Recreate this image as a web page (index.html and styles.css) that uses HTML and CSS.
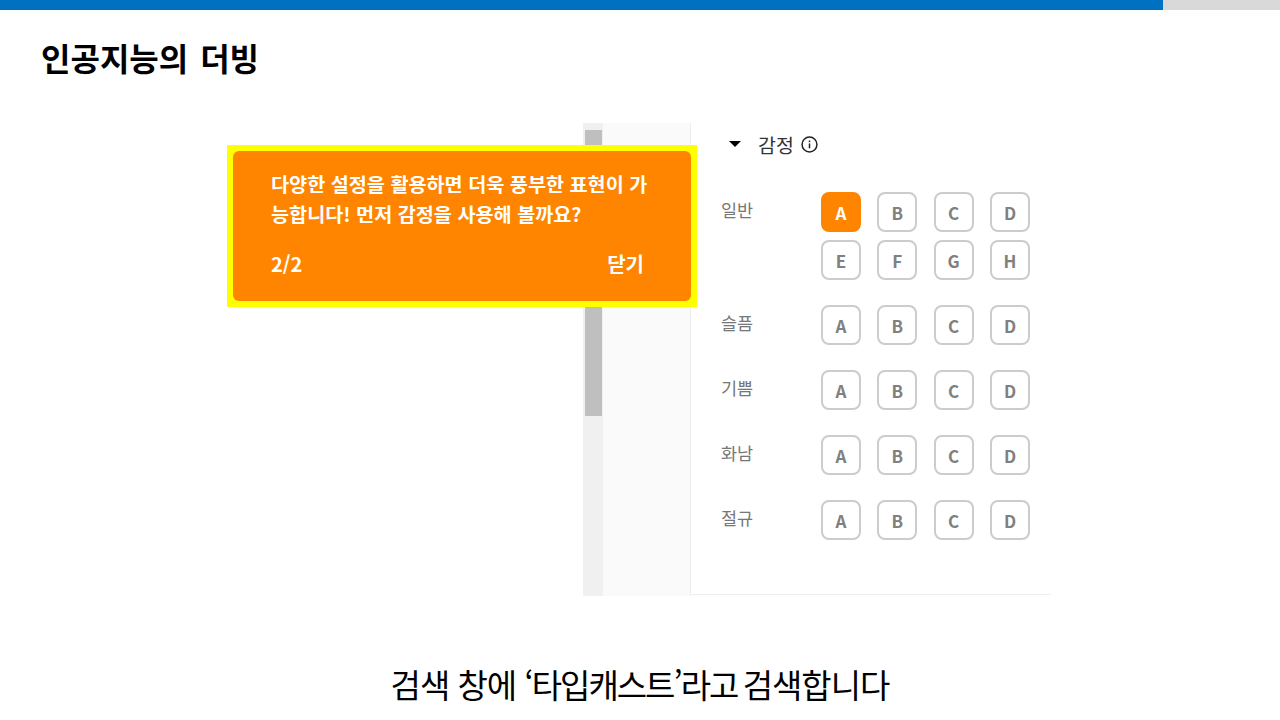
FILE: index.html
```html
<!DOCTYPE html>
<html lang="ko">
<head>
    <meta charset="UTF-8">
    <title>인공지능의 더빙</title>
    <link rel="stylesheet" href="styles.css">
</head>
<body>
    <div class="progress"><div class="progress-fill"></div></div>

    <h1 class="slide-title">인공지능의 더빙</h1>

    <div class="stage">
        <div class="scrollbar"><div class="scrollbar-thumb"></div></div>
        <div class="side"></div>
        <div class="panel">
            <div class="panel-head">
                <span class="caret"></span>
                <span class="panel-title">감정</span>
                <svg class="info" width="17" height="17" viewBox="0 0 16 16">
                    <circle cx="8" cy="8" r="7" fill="none" stroke="#222" stroke-width="1.4"/>
                    <rect x="7.3" y="7" width="1.4" height="4.6" fill="#222"/>
                    <rect x="7.3" y="4.3" width="1.4" height="1.5" fill="#222"/>
                </svg>
            </div>

            <div class="emotion emotion-first">
                <div class="emotion-name">일반</div>
                <div class="chips">
                    <button class="chip chip-on">A</button>
                    <button class="chip">B</button>
                    <button class="chip">C</button>
                    <button class="chip">D</button>
                    <button class="chip">E</button>
                    <button class="chip">F</button>
                    <button class="chip">G</button>
                    <button class="chip">H</button>
                </div>
            </div>
            <div class="emotion">
                <div class="emotion-name">슬픔</div>
                <div class="chips">
                    <button class="chip">A</button>
                    <button class="chip">B</button>
                    <button class="chip">C</button>
                    <button class="chip">D</button>
                </div>
            </div>
            <div class="emotion">
                <div class="emotion-name">기쁨</div>
                <div class="chips">
                    <button class="chip">A</button>
                    <button class="chip">B</button>
                    <button class="chip">C</button>
                    <button class="chip">D</button>
                </div>
            </div>
            <div class="emotion">
                <div class="emotion-name">화남</div>
                <div class="chips">
                    <button class="chip">A</button>
                    <button class="chip">B</button>
                    <button class="chip">C</button>
                    <button class="chip">D</button>
                </div>
            </div>
            <div class="emotion">
                <div class="emotion-name">절규</div>
                <div class="chips">
                    <button class="chip">A</button>
                    <button class="chip">B</button>
                    <button class="chip">C</button>
                    <button class="chip">D</button>
                </div>
            </div>
        </div>

        <div class="tip">
            <div class="tip-box">
                <p class="tip-text">다양한 설정을 활용하면 더욱 풍부한 표현이 가능합니다! 먼저 감정을 사용해 볼까요?</p>
                <div class="tip-foot">
                    <span>2/2</span>
                    <span>닫기</span>
                </div>
            </div>
        </div>
    </div>

    <p class="caption">검색 창에 <span class="caption-tight">‘타입캐스트’라고 </span>검색합니다</p>
</body>
</html>
```

FILE: styles.css
```css
* {
    box-sizing: border-box;
}
html, body {
    height: 720px;
    overflow: hidden;
}
body {
    margin: 0;
    background-color: #fff;
    font-family: 'Noto Sans CJK KR', 'Noto Sans', sans-serif;
}
.progress {
    height: 10px;
    background-color: #d9d9d9;
}
.progress-fill {
    width: 1163px;
    height: 100%;
    background-color: #0070c0;
}
.slide-title {
    margin: 0;
    padding: 23px 0 0 41px;
    height: 113px;
    font-size: 32px;
    line-height: 48px;
    font-weight: 700;
    word-spacing: 3px;
    color: #000;
}
.stage {
    position: relative;
    display: flex;
    width: 468px;
    height: 473px;
    margin-left: 583px;
}
.scrollbar {
    width: 20px;
    padding: 7px 1px 0 2px;
    background-color: #f0f0f0;
}
.scrollbar-thumb {
    height: 286px;
    background-color: #bfbfbf;
}
.side {
    width: 88px;
    background-color: #fafafa;
    border-right: 1px solid #eee;
}
.panel {
    flex: 1;
    height: 472px;
    padding-left: 30px;
    border-bottom: 1px solid #eee;
}
.panel-head {
    display: flex;
    align-items: center;
    height: 42px;
    padding-left: 8px;
}
.caret {
    width: 0;
    height: 0;
    margin-right: 17px;
    border-left: 6px solid transparent;
    border-right: 6px solid transparent;
    border-top: 6px solid #000;
}
.panel-title {
    margin-right: 7px;
    font-size: 19.5px;
    color: #333;
}
.emotion {
    display: flex;
    margin-top: 25px;
}
.emotion-first {
    margin-top: 27px;
}
.emotion-name {
    width: 100px;
    font-size: 17.5px;
    line-height: 35px;
    color: #777;
}
.chips {
    display: grid;
    grid-template-columns: repeat(4, 40px);
    column-gap: 16.33px;
    row-gap: 8px;
}
.chip {
    width: 40px;
    height: 40px;
    padding: 0;
    border: 2px solid #ccc;
    border-radius: 8px;
    background-color: #fff;
    font-family: inherit;
    font-size: 17px;
    font-weight: 700;
    color: #808080;
}
.chip-on {
    border-color: #ff8400;
    background-color: #ff8400;
    color: #fff;
}
.tip {
    position: absolute;
    left: -356px;
    top: 22px;
    width: 470px;
    height: 162px;
    padding: 6px;
    background-color: #ffff00;
}
.tip-box {
    height: 100%;
    padding: 18px 38px 0;
    border-radius: 6px;
    background-color: #ff8400;
    color: #fff;
    font-weight: 700;
}
.tip-text {
    margin: 0;
    font-size: 19.65px;
    line-height: 30px;
}
.tip-foot {
    display: flex;
    justify-content: space-between;
    margin-top: 20px;
    padding-right: 9px;
    font-size: 20px;
    line-height: 30px;
}
.caption {
    margin: 0;
    padding-top: 64px;
    text-align: center;
    font-size: 33px;
    line-height: 48px;
    letter-spacing: -1px;
    color: #000;
}
.caption-tight {
    letter-spacing: -2px;
    word-spacing: -2px;
}
```
